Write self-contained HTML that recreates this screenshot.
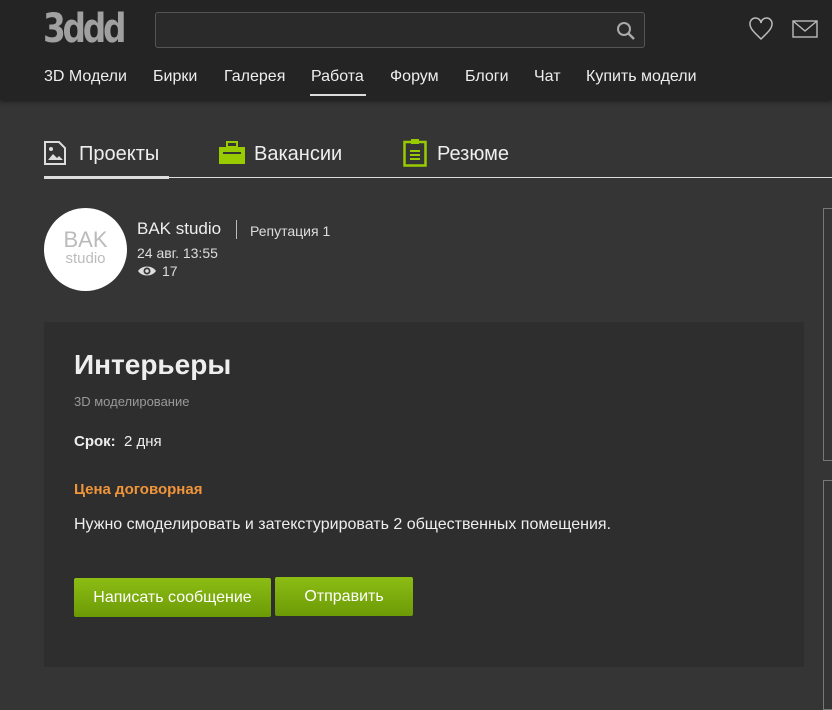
<!DOCTYPE html>
<html><head><meta charset="utf-8"><style>
*{margin:0;padding:0;box-sizing:border-box}
body{width:832px;height:700px;overflow:hidden;background:#353535;font-family:"Liberation Sans",Arial,sans-serif;color:#eee;position:relative}
.hdr{position:absolute;left:0;top:0;width:832px;height:100px;background:#242424;box-shadow:0 2px 4px rgba(0,0,0,.4)}
.logo{position:absolute;left:43px;top:8px;font:bold 40px/42px "DejaVu Sans",sans-serif;color:#a0a0a0;letter-spacing:-4px;transform:scaleX(.82);transform-origin:left}
.search{position:absolute;left:155px;top:12px;width:490px;height:36px;border:1px solid #555;border-radius:3px;background:#2a2a2a}
.nav{position:absolute;top:68px;font-size:16px;color:#eee}
.nav span{position:absolute;white-space:nowrap}
.tabs span{position:absolute;top:143px;font-size:20px;color:#eee;white-space:nowrap}
.abs{position:absolute}
.btn{position:absolute;top:578px;height:39px;background:linear-gradient(#8bbd14,#6c9a06);color:#fff;font-size:16px;text-align:center;line-height:39px;border-radius:2px}
</style></head><body>
<div class="hdr">
<div class="logo">3ddd</div>
<div class="search"><svg style="position:absolute;right:8px;top:8px" width="20" height="20" viewBox="0 0 20 20"><circle cx="8" cy="8" r="6" fill="none" stroke="#aaa" stroke-width="2"/><path d="M12.5 12.5L18 18" stroke="#aaa" stroke-width="2.4"/></svg></div>
<svg class="abs" style="left:748px;top:17px" width="26" height="24" viewBox="0 0 26 24"><path d="M13 22C7 16 2 12 2 7a5.5 5.5 0 0 1 11-1 5.5 5.5 0 0 1 11 1c0 5-5 9-11 15z" fill="none" stroke="#bbb" stroke-width="1.5"/></svg>
<svg class="abs" style="left:792px;top:20px" width="26" height="18" viewBox="0 0 26 18"><rect x="1" y="1" width="24" height="16" fill="none" stroke="#bbb" stroke-width="1.4"/><path d="M1 1l12 10L25 1" fill="none" stroke="#bbb" stroke-width="1.4"/></svg>
<div class="nav"><span style="left:44px">3D Модели</span><span style="left:153px">Бирки</span><span style="left:224px">Галерея</span><span style="left:311px">Работа</span><span style="left:390px">Форум</span><span style="left:465px">Блоги</span><span style="left:534px">Чат</span><span style="left:586px">Купить модели</span></div>
<div class="abs" style="left:310px;top:94px;width:56px;height:2px;background:#ddd"></div>
</div>
<div class="tabs"><span style="left:79px">Проекты</span><span style="left:254px">Вакансии</span><span style="left:437px">Резюме</span></div>
<svg class="abs" style="left:44px;top:141px" width="22" height="24" viewBox="0 0 22 24"><path d="M1 1h14l6 6v16H1z" fill="none" stroke="#ddd" stroke-width="2"/><path d="M4 19l5-6 4 4 2-2 4 4z" fill="#ddd"/><circle cx="7" cy="8" r="2" fill="#ddd"/></svg>
<svg class="abs" style="left:218px;top:141px" width="28" height="24" viewBox="0 0 28 24"><rect x="9" y="1" width="10" height="5" fill="none" stroke="#9c0" stroke-width="2"/><rect x="1" y="6" width="26" height="17" fill="#9c0"/><rect x="5" y="11" width="18" height="2" fill="#353535"/></svg>
<svg class="abs" style="left:403px;top:138px" width="24" height="29" viewBox="0 0 24 29"><rect x="1.5" y="4" width="21" height="23.5" fill="none" stroke="#9c0" stroke-width="2.5"/><rect x="8" y="1" width="8" height="5" fill="#9c0"/><path d="M7 13h10M7 17h10M7 21h10" stroke="#9c0" stroke-width="2"/></svg>
<div class="abs" style="left:44px;top:177px;width:788px;height:1px;background:#ddd"></div>
<div class="abs" style="left:44px;top:176px;width:125px;height:3px;background:#ddd"></div>
<div class="abs" style="left:44px;top:208px;width:83px;height:83px;border-radius:50%;background:#fff;text-align:center;color:#bbb"><div style="font-size:22px;margin-top:21px;line-height:22px">BAK</div><div style="font-size:15px;line-height:16px">studio</div></div>
<div class="abs" style="left:137px;top:219px;font-size:17px">BAK studio</div>
<div class="abs" style="left:236px;top:220px;width:1px;height:19px;background:#bbb"></div>
<div class="abs" style="left:250px;top:223px;font-size:14px;color:#ddd">Репутация 1</div>
<div class="abs" style="left:137px;top:245px;font-size:14px;color:#ddd">24 авг. 13:55</div>
<svg class="abs" style="left:137px;top:265px" width="20" height="12" viewBox="0 0 20 12"><path d="M1 6C5 0 15 0 19 6 15 12 5 12 1 6z" fill="#ddd"/><circle cx="10" cy="6" r="3.5" fill="#353535"/><circle cx="10" cy="6" r="1.8" fill="#ddd"/></svg>
<div class="abs" style="left:162px;top:263px;font-size:14px;color:#ddd">17</div>
<div class="abs" style="left:823px;top:208px;width:9px;height:253px;border:1px solid #777;border-right:none"></div>
<div class="abs" style="left:823px;top:480px;width:9px;height:230px;border:1px solid #777;border-right:none"></div>
<div class="abs" style="left:44px;top:322px;width:760px;height:345px;background:#2e2e2e"></div>
<div class="abs" style="left:74px;top:349px;font-size:28px;font-weight:bold;color:#eee">Интерьеры</div>
<div class="abs" style="left:74px;top:394px;font-size:13px;color:#999">3D моделирование</div>
<div class="abs" style="left:74px;top:433px;font-size:15px"><b>Срок:</b>&nbsp; 2 дня</div>
<div class="abs" style="left:74px;top:481px;font-size:15px;font-weight:bold;color:#f0953a">Цена договорная</div>
<div class="abs" style="left:74px;top:516px;font-size:16px;color:#eee">Нужно смоделировать и затекстурировать 2 общественных помещения.</div>
<div class="btn" style="left:74px;width:197px">Написать сообщение</div>
<div class="btn" style="left:275px;width:138px;top:577px">Отправить</div>
</body></html>
